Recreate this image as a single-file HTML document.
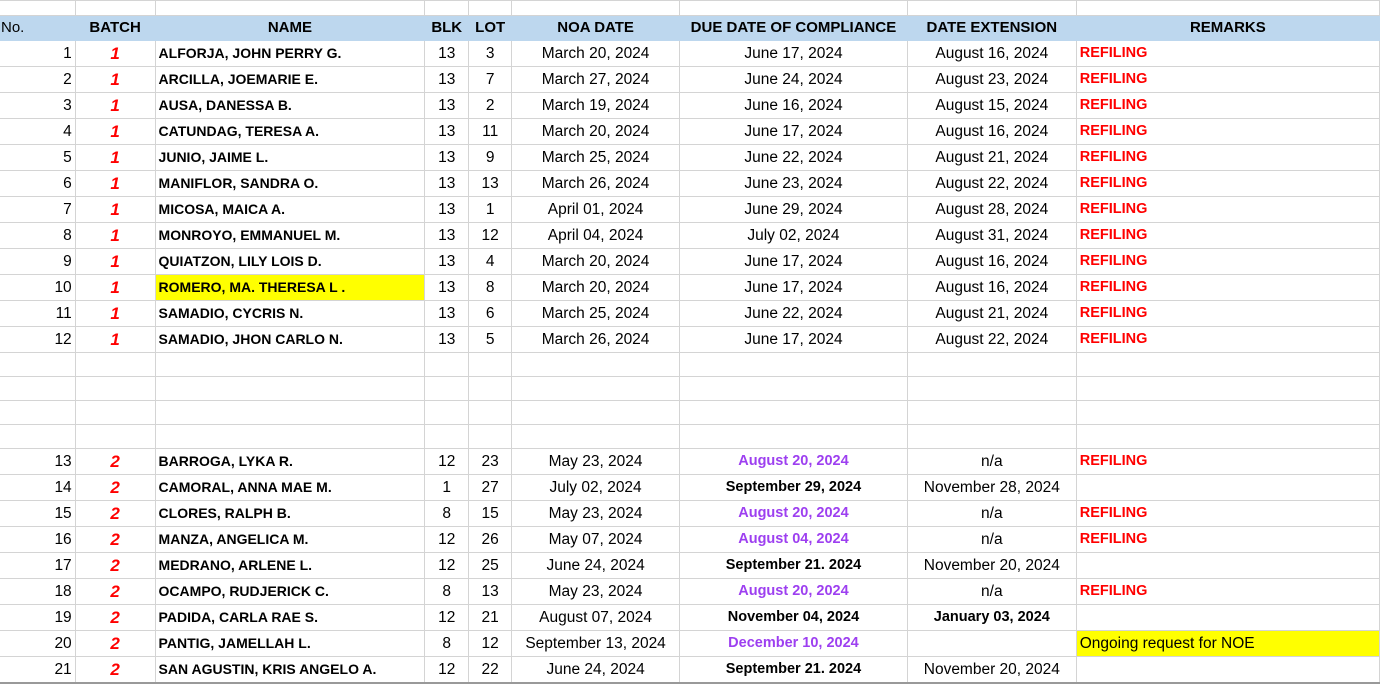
<!DOCTYPE html><html><head><style>
body{margin:0;width:1381px;height:683px;overflow:hidden;background:#fff;font-family:"Liberation Sans",sans-serif;font-size:15.5px;color:#000}
table{border-collapse:collapse;table-layout:fixed;position:absolute;left:-1px;top:0}
td{border:1px solid #d4d4d4;padding:0 3px;white-space:nowrap;overflow:visible;height:25px;line-height:25px}
tr.top td{height:14px;line-height:14px}
tr.h td{background:#bdd7ee;font-weight:bold;text-align:center;border-color:#bdd7ee;font-size:15px;height:24px;line-height:24px}
tr.h td:first-child{text-align:left;font-weight:normal;padding-left:1px}
tr.e td{height:23px}
td.n{text-align:right}
td.b{text-align:center;color:#f00;font-weight:bold;font-style:italic;font-size:17px}
td.nm{font-weight:bold;font-size:14px}
td.c{text-align:center}
td.r{color:#f00;font-weight:bold;font-size:14.5px}
.p{color:#9d3ff0;font-weight:bold;font-size:14.5px}
.k{font-weight:bold;font-size:14.5px}
.y{background:#ffff00}
tr:last-child td{border-bottom:2px solid #999}
</style></head><body><table>
<colgroup><col style="width:76px"><col style="width:80px"><col style="width:270px"><col style="width:44px"><col style="width:43px"><col style="width:168px"><col style="width:228px"><col style="width:169px"><col style="width:304px"></colgroup>
<tr class="top"><td></td><td></td><td></td><td></td><td></td><td></td><td></td><td></td><td></td></tr>
<tr class="h"><td>No.</td><td>BATCH</td><td>NAME</td><td>BLK</td><td>LOT</td><td>NOA DATE</td><td>DUE DATE OF COMPLIANCE</td><td>DATE EXTENSION</td><td>REMARKS</td></tr>
<tr><td class="n">1</td><td class="b">1</td><td class="nm">ALFORJA, JOHN PERRY G.</td><td class="c">13</td><td class="c">3</td><td class="c">March 20, 2024</td><td class="c">June 17, 2024</td><td class="c">August 16, 2024</td><td class="r">REFILING</td></tr>
<tr><td class="n">2</td><td class="b">1</td><td class="nm">ARCILLA, JOEMARIE E.</td><td class="c">13</td><td class="c">7</td><td class="c">March 27, 2024</td><td class="c">June 24, 2024</td><td class="c">August 23, 2024</td><td class="r">REFILING</td></tr>
<tr><td class="n">3</td><td class="b">1</td><td class="nm">AUSA, DANESSA B.</td><td class="c">13</td><td class="c">2</td><td class="c">March 19, 2024</td><td class="c">June 16, 2024</td><td class="c">August 15, 2024</td><td class="r">REFILING</td></tr>
<tr><td class="n">4</td><td class="b">1</td><td class="nm">CATUNDAG, TERESA A.</td><td class="c">13</td><td class="c">11</td><td class="c">March 20, 2024</td><td class="c">June 17, 2024</td><td class="c">August 16, 2024</td><td class="r">REFILING</td></tr>
<tr><td class="n">5</td><td class="b">1</td><td class="nm">JUNIO, JAIME L.</td><td class="c">13</td><td class="c">9</td><td class="c">March 25, 2024</td><td class="c">June 22, 2024</td><td class="c">August 21, 2024</td><td class="r">REFILING</td></tr>
<tr><td class="n">6</td><td class="b">1</td><td class="nm">MANIFLOR, SANDRA O.</td><td class="c">13</td><td class="c">13</td><td class="c">March 26, 2024</td><td class="c">June 23, 2024</td><td class="c">August 22, 2024</td><td class="r">REFILING</td></tr>
<tr><td class="n">7</td><td class="b">1</td><td class="nm">MICOSA, MAICA A.</td><td class="c">13</td><td class="c">1</td><td class="c">April 01, 2024</td><td class="c">June 29, 2024</td><td class="c">August 28, 2024</td><td class="r">REFILING</td></tr>
<tr><td class="n">8</td><td class="b">1</td><td class="nm">MONROYO, EMMANUEL M.</td><td class="c">13</td><td class="c">12</td><td class="c">April 04, 2024</td><td class="c">July 02, 2024</td><td class="c">August 31, 2024</td><td class="r">REFILING</td></tr>
<tr><td class="n">9</td><td class="b">1</td><td class="nm">QUIATZON, LILY LOIS D.</td><td class="c">13</td><td class="c">4</td><td class="c">March 20, 2024</td><td class="c">June 17, 2024</td><td class="c">August 16, 2024</td><td class="r">REFILING</td></tr>
<tr><td class="n">10</td><td class="b">1</td><td class="nm y">ROMERO, MA. THERESA L .</td><td class="c">13</td><td class="c">8</td><td class="c">March 20, 2024</td><td class="c">June 17, 2024</td><td class="c">August 16, 2024</td><td class="r">REFILING</td></tr>
<tr><td class="n">11</td><td class="b">1</td><td class="nm">SAMADIO, CYCRIS N.</td><td class="c">13</td><td class="c">6</td><td class="c">March 25, 2024</td><td class="c">June 22, 2024</td><td class="c">August 21, 2024</td><td class="r">REFILING</td></tr>
<tr><td class="n">12</td><td class="b">1</td><td class="nm">SAMADIO, JHON CARLO N.</td><td class="c">13</td><td class="c">5</td><td class="c">March 26, 2024</td><td class="c">June 17, 2024</td><td class="c">August 22, 2024</td><td class="r">REFILING</td></tr>
<tr class="e"><td></td><td></td><td></td><td></td><td></td><td></td><td></td><td></td><td></td></tr>
<tr class="e"><td></td><td></td><td></td><td></td><td></td><td></td><td></td><td></td><td></td></tr>
<tr class="e"><td></td><td></td><td></td><td></td><td></td><td></td><td></td><td></td><td></td></tr>
<tr class="e"><td></td><td></td><td></td><td></td><td></td><td></td><td></td><td></td><td></td></tr>
<tr><td class="n">13</td><td class="b">2</td><td class="nm">BARROGA, LYKA R.</td><td class="c">12</td><td class="c">23</td><td class="c">May 23, 2024</td><td class="c p">August 20, 2024</td><td class="c">n/a</td><td class="r">REFILING</td></tr>
<tr><td class="n">14</td><td class="b">2</td><td class="nm">CAMORAL, ANNA MAE M.</td><td class="c">1</td><td class="c">27</td><td class="c">July 02, 2024</td><td class="c k">September 29, 2024</td><td class="c">November 28, 2024</td><td></td></tr>
<tr><td class="n">15</td><td class="b">2</td><td class="nm">CLORES, RALPH B.</td><td class="c">8</td><td class="c">15</td><td class="c">May 23, 2024</td><td class="c p">August 20, 2024</td><td class="c">n/a</td><td class="r">REFILING</td></tr>
<tr><td class="n">16</td><td class="b">2</td><td class="nm">MANZA, ANGELICA M.</td><td class="c">12</td><td class="c">26</td><td class="c">May 07, 2024</td><td class="c p">August 04, 2024</td><td class="c">n/a</td><td class="r">REFILING</td></tr>
<tr><td class="n">17</td><td class="b">2</td><td class="nm">MEDRANO, ARLENE L.</td><td class="c">12</td><td class="c">25</td><td class="c">June 24, 2024</td><td class="c k">September 21. 2024</td><td class="c">November 20, 2024</td><td></td></tr>
<tr><td class="n">18</td><td class="b">2</td><td class="nm">OCAMPO, RUDJERICK C.</td><td class="c">8</td><td class="c">13</td><td class="c">May 23, 2024</td><td class="c p">August 20, 2024</td><td class="c">n/a</td><td class="r">REFILING</td></tr>
<tr><td class="n">19</td><td class="b">2</td><td class="nm">PADIDA, CARLA RAE S.</td><td class="c">12</td><td class="c">21</td><td class="c">August 07, 2024</td><td class="c k">November 04, 2024</td><td class="c k">January 03, 2024</td><td></td></tr>
<tr><td class="n">20</td><td class="b">2</td><td class="nm">PANTIG, JAMELLAH L.</td><td class="c">8</td><td class="c">12</td><td class="c">September 13, 2024</td><td class="c p">December 10, 2024</td><td class="c"></td><td class="y">Ongoing request for NOE</td></tr>
<tr><td class="n">21</td><td class="b">2</td><td class="nm">SAN AGUSTIN, KRIS ANGELO A.</td><td class="c">12</td><td class="c">22</td><td class="c">June 24, 2024</td><td class="c k">September 21. 2024</td><td class="c">November 20, 2024</td><td></td></tr>
</table></body></html>
